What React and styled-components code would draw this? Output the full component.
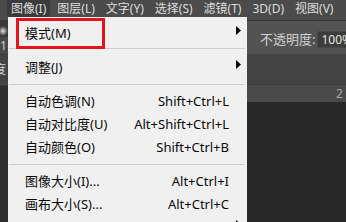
import React from "react";
import styled, { createGlobalStyle } from "styled-components";

const GlobalStyle = createGlobalStyle`
  html, body {
    margin: 0;
    padding: 0;
    overflow: hidden;
    background: #282828;
  }
  body {
    font-family: "Noto Sans", "Noto Sans CJK SC", sans-serif;
  }
`;

const Window = styled.div`
  position: relative;
  width: 346px;
  height: 222px;
  overflow: hidden;
  display: flex;
  flex-direction: column;
  background: #282828;
`;

const MenuBar = styled.div`
  height: 21px;
  flex: none;
  display: flex;
  align-items: flex-start;
  gap: 3px;
  padding-left: 7px;
  background: #4b4b4b;
  border-bottom: 1px solid #363636;
  box-sizing: border-box;
`;

const MenuBarItem = styled.div`
  height: 17px;
  line-height: 17px;
  padding: 0 4px;
  font-size: 12px;
  color: #dedede;
  white-space: nowrap;
  background: ${(p) => (p.$active ? "#3b3b3b" : "transparent")};
`;

const Workspace = styled.div`
  flex: 1;
  display: flex;
  min-height: 0;
`;

const SidePanel = styled.div`
  width: 8px;
  flex: none;
  display: flex;
  flex-direction: column;
  overflow: hidden;
  background: #2e2e2e;
`;

const PresetIcon = styled.div`
  height: 16px;
  background: radial-gradient(circle at 3px 10px, #e8e8e8 0, #9a9a9a 2px, #383838 5px);
`;

const SideRow = styled.div`
  height: ${(p) => p.$h}px;
  line-height: ${(p) => p.$h}px;
  background: ${(p) => p.$bg};
  color: #cfcfcf;
  font-size: 12px;
  white-space: nowrap;
  margin-left: ${(p) => p.$shift || 0}px;
  border-bottom: 1px solid #383838;
`;

const Main = styled.div`
  flex: 1;
  display: flex;
  flex-direction: column;
  min-width: 0;
`;

const OptionsBar = styled.div`
  height: 33px;
  flex: none;
  display: flex;
  align-items: center;
  gap: 2px;
  padding: 3px 0 0 252px;
  background: #535353;
  box-sizing: border-box;
`;

const OptionLabel = styled.span`
  font-size: 13px;
  color: #d2d2d2;
  white-space: nowrap;
  line-height: 15px;
`;

const OptionField = styled.div`
  height: 15px;
  line-height: 15px;
  padding: 0 3px;
  font-size: 12px;
  color: #e6e6e6;
  background: #3c3c3c;
  border: 1px solid #474747;
  white-space: nowrap;
`;

const TabRow = styled.div`
  height: 31px;
  flex: none;
  background: #444444;
  border-bottom: 1px solid #3a3a3a;
  box-sizing: border-box;
`;

const Ruler = styled.div`
  height: 17px;
  flex: none;
  position: relative;
  background: #4a4a4a;
  display: flex;
  align-items: flex-end;
  padding-left: 326px;
`;

const RulerTicks = styled.svg`
  position: absolute;
  left: 0;
  top: 0;
`;

const RulerNumber = styled.span`
  position: relative;
  font-size: 12px;
  line-height: 16px;
  color: #a8a8a8;
  padding-left: 2px;
`;

const Canvas = styled.div`
  flex: 1;
  background: #282828;
`;

const Dropdown = styled.div`
  position: absolute;
  top: 17px;
  left: 8px;
  width: 239px;
  padding-top: 5px;
  background: #f0f0f0;
  display: flex;
  flex-direction: column;
`;

const Row = styled.div`
  height: 23px;
  flex: none;
  display: flex;
  align-items: center;
  justify-content: space-between;
  padding-left: 17px;
  padding-right: ${(p) => (p.$sub ? 6 : 18)}px;
  font-size: 13px;
  color: #0a0a0a;
  white-space: nowrap;
`;

const Label = styled.span`
  line-height: 23px;
`;

const Shortcut = styled.span`
  line-height: 23px;
`;

const Arrow = styled.svg`
  flex: none;
  margin-bottom: 6px;
`;

const Separator = styled.div`
  height: 1px;
  margin: ${(p) => (p.$first ? "3px 2px 7px 1px" : "5px 2px 5px 1px")};
  background: #cbcbcb;
`;

const Highlight = styled.div`
  position: absolute;
  left: 16px;
  top: 18px;
  width: 89px;
  height: 31px;
  box-sizing: border-box;
  border: 3px solid #e3141b;
`;

const menuBar = ["图像(I)", "图层(L)", "文字(Y)", "选择(S)", "滤镜(T)", "3D(D)", "视图(V)"];

const items = [
  { label: "模式(M)", sub: true },
  { sep: true, first: true },
  { label: "调整(J)", sub: true },
  { sep: true },
  { label: "自动色调(N)", key: "Shift+Ctrl+L" },
  { label: "自动对比度(U)", key: "Alt+Shift+Ctrl+L" },
  { label: "自动颜色(O)", key: "Shift+Ctrl+B" },
  { sep: true },
  { label: "图像大小(I)...", key: "Alt+Ctrl+I" },
  { label: "画布大小(S)...", key: "Alt+Ctrl+C" },
  { label: "", sub: true },
];

function Ticks() {
  const ticks = [];
  for (let k = 1; k <= 14; k++) {
    const x = 84.5 - k * 6.6;
    const h = k % 5 === 0 ? 6 : 3;
    ticks.push(<line key={k} x1={x} x2={x} y1={17 - h} y2={17} stroke="#8c8c8c" strokeWidth="1" />);
  }
  return (
    <RulerTicks width="99" height="17" viewBox="0 0 99 17">
      {ticks}
      <line x1="84.5" x2="84.5" y1="2" y2="17" stroke="#8c8c8c" strokeWidth="1" />
    </RulerTicks>
  );
}

export default function App() {
  return (
    <>
      <GlobalStyle />
      <Window>
        <MenuBar>
          {menuBar.map((m, i) => (
            <MenuBarItem key={m} $active={i === 0}>
              {m}
            </MenuBarItem>
          ))}
        </MenuBar>
        <Workspace>
          <SidePanel>
            <PresetIcon />
            <SideRow $h={17} $bg="#4a4a4a">1</SideRow>
            <SideRow $h={30} $bg="#444444" $shift={-6}>度</SideRow>
          </SidePanel>
          <Main>
            <OptionsBar>
              <OptionLabel>不透明度:</OptionLabel>
              <OptionField>100%</OptionField>
            </OptionsBar>
            <TabRow />
            <Ruler>
              <Ticks />
              <RulerNumber>2</RulerNumber>
            </Ruler>
            <Canvas />
          </Main>
        </Workspace>
        <Dropdown>
          {items.map((it, i) =>
            it.sep ? (
              <Separator key={i} $first={it.first} />
            ) : (
              <Row key={i} $sub={it.sub}>
                <Label>{it.label}</Label>
                {it.sub ? (
                  <Arrow width="5" height="9" viewBox="0 0 5 9">
                    <polygon points="0,0 5,4.5 0,9" fill="#000" />
                  </Arrow>
                ) : (
                  <Shortcut>{it.key}</Shortcut>
                )}
              </Row>
            )
          )}
        </Dropdown>
        <Highlight />
      </Window>
    </>
  );
}
